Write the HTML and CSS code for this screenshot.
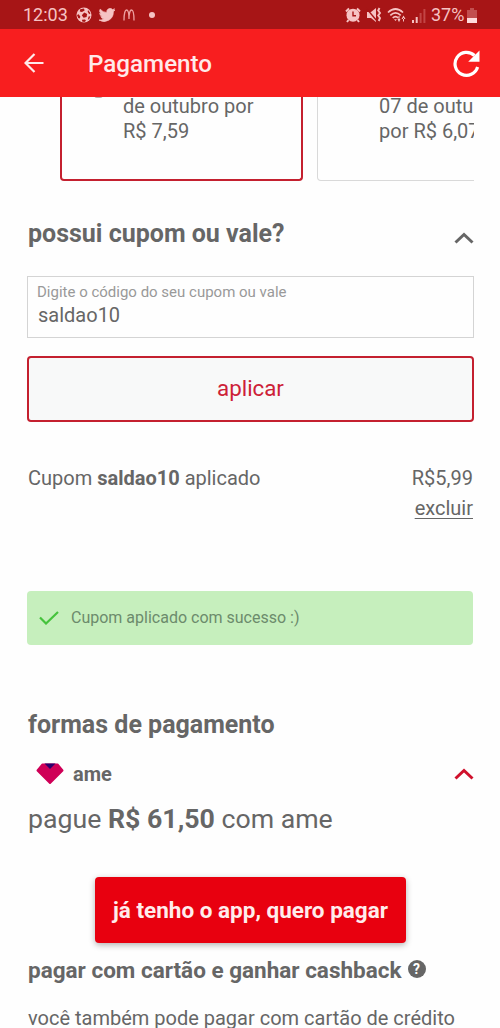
FILE: index.html
```html
<!DOCTYPE html>
<html lang="pt-BR">
<head>
<meta charset="utf-8">
<title>Pagamento</title>
<link rel="stylesheet" href="styles.css">
</head>
<body>
<div class="screen">
  <div class="status">
    <span class="clock">12:03</span>
    <svg class="ic-ball" width="16" height="16" viewBox="0 0 16 16"><circle cx="8" cy="8" r="7.500" fill="#f6c3c3"/><g fill="#a71516"><path d="M8.300 5.600l2.800 1.500-.5 3-3 .6-1.800-2.500z"/><path d="M4.200 2.200L8 1.400l.6 2-2.600 1.700-2.200-.6zM12 3l2.500 3.200-1.300 1-1.500-2.400zM1 8l1.700-.8 1.700 2.600-.8 1.800-1.400-.6zM6 12.800l3-.4 1 1.400-1.600 1.300-2.200-.5zM12.600 9.600l1.800-.4-1.200 3-1.400.2z"/></g></svg>
    <svg class="ic-bird" width="16" height="14" viewBox="0 0 24 20"><path fill="#f6c3c3" stroke="#f6c3c3" d="M24 2.600a10 10 0 0 1-2.800.8A5 5 0 0 0 23.300.6a10 10 0 0 1-3.100 1.200A4.900 4.900 0 0 0 11.800 6.300 14 14 0 0 1 1.700 1.200a4.900 4.900 0 0 0 1.500 6.600 4.900 4.900 0 0 1-2.200-.6 4.900 4.900 0 0 0 3.900 4.900 5 5 0 0 1-2.200.1 4.900 4.900 0 0 0 4.600 3.400A9.900 9.900 0 0 1 0 17.600a14 14 0 0 0 21.500-12.500A10 10 0 0 0 24 2.600z"/></svg>
    <svg class="ic-arch" width="12" height="12" viewBox="0 0 12 12"><path d="M1 11.500C1 5 2 1 3.500 1S6 5 6 10C6 5 7 1 8.500 1S11 5 11 11.500" fill="none" stroke="#eda0a0" stroke-width="1.300"/></svg>
    <span class="dot"></span>
    <span class="grow"></span>
    <svg class="ic-alarm" width="16" height="16" viewBox="0 0 16 16"><circle cx="8" cy="8.200" r="6.500" fill="#f6c3c3"/><path d="M1 4.500L4 1.500M15 4.500L12 1.500M3.500 13L2 15M12.500 13L14 15" stroke="#f6c3c3" stroke-width="2"/><path d="M8 4.500V8.700h3" fill="none" stroke="#a71516" stroke-width="1.400"/></svg>
    <svg class="ic-mute" width="16" height="16" viewBox="0 0 16 16"><path d="M1 5h4l5-4v14l-5-4H1z" fill="#f6c3c3"/><path d="M0 1l11 13" stroke="#a71516" stroke-width="1.400"/><path d="M13.500 1l-1.300 2.500 1.800 2.500-1.800 2.500 1.800 2.500-1.300 3" fill="none" stroke="#f6c3c3" stroke-width="1.900"/></svg>
    <svg class="ic-wifi" width="20" height="16" viewBox="0 0 20 16"><g fill="none" stroke="#f6c3c3" stroke-width="1.700"><path d="M1 5.500Q8.500-1.500 16 5.500M3.300 8.300Q8.500 3.500 13.700 8.300M5.700 10.800Q8.500 8.300 11.300 10.800"/></g><path d="M7 12.300h3L8.500 14zM10.500 12h3L12 15.300zM14.500 12h4L16.500 8.500zM11.500 9h1v4h-1zM16 11h1v3.500h-1z" fill="#f6c3c3"/></svg>
    <svg class="ic-signal" width="14" height="14" viewBox="0 0 14 14"><path d="M0 11h2v3H0zM3.700 8h2v6h-2z" fill="#f6c3c3"/><path d="M7.600 4h2v10h-2zM11.400 0h2v14h-2z" fill="#c24545"/></svg>
    <span class="pct">37%</span>
    <svg class="ic-batt" width="10" height="15" viewBox="0 0 10 15"><path d="M3 0h4v2h3v8H0V2h3z" fill="#c24f4f"/><path d="M0 10h10v5H0z" fill="#ffdcdc"/></svg>
  </div>
  <div class="appbar">
    <svg width="20" height="20" viewBox="0 0 20 20"><path d="M19.500 10H2M10.500 1L1.500 10l9 9" fill="none" stroke="#ffe9e9" stroke-width="2.200"/></svg>
    <h1 class="title">Pagamento</h1>
    <svg width="27" height="27" viewBox="0 0 27 27"><path d="M24.600 17A11.500 11.500 0 1 1 21.500 5.500" fill="none" stroke="#fff" stroke-width="3.200"/><path d="M26.500.5v11.300H15.200z" fill="#fff"/></svg>
  </div>

  <div class="content">
    <div class="offers">
      <div class="offer offer-on"><span class="radio"></span><div class="when">de outubro por<br>R$ 7,59</div></div>
      <div class="offer"><div class="when">07 de outu<br>por R$ 6,07</div></div>
    </div>

    <div class="coupon-head">
      <h2 class="heading">possui cupom ou vale?</h2>
      <svg class="chev" width="20" height="12" viewBox="0 0 20 12"><path d="M1.500 10.500L10 2.500l8.500 8" fill="none" stroke="#666" stroke-width="3"/></svg>
    </div>
    <div class="field">
      <div class="label">Digite o código do seu cupom ou vale</div>
      <div class="value">saldao10</div>
    </div>
    <div class="apply">aplicar</div>
    <div class="applied">
      <div>Cupom <b>saldao10</b> aplicado</div>
      <div class="amount">R$5,99<br><span class="remove">excluir</span></div>
    </div>
    <div class="success">
      <svg width="20" height="14" viewBox="0 0 20 14"><path d="M1 6.500l6 6L19 1" fill="none" stroke="#45c33c" stroke-width="2.200"/></svg>
      <span>Cupom aplicado com sucesso :)</span>
    </div>

    <h2 class="heading methods">formas de pagamento</h2>
    <div class="ame">
      <svg width="28" height="22" viewBox="0 0 28 22"><path d="M6.500 1.500h15l5 6L14 20 1.500 7.500z" fill="#cf0057" stroke="#cf0057" stroke-width="2" stroke-linejoin="round"/><path d="M8.500.5h11L14 6z" fill="#2c006b"/></svg>
      <span class="ame-name">ame</span>
      <svg class="chev" width="20" height="12" viewBox="0 0 20 12"><path d="M1.500 10.500L10 2.500l8.500 8" fill="none" stroke="#d0102c" stroke-width="3"/></svg>
    </div>
    <div class="total">pague <b>R$ 61,50</b> com ame</div>
    <div class="pay">já tenho o app, quero pagar</div>
    <div class="cashback"><span>pagar com cartão e ganhar cashback</span><span class="help">?</span></div>
    <div class="note">você também pode pagar com cartão de crédito</div>
  </div>
</div>
</body>
</html>
```

FILE: styles.css
```css
* { box-sizing: border-box; }
body { margin: 0; background: #fefefe; font-family: Roboto, sans-serif; color: #666; }
svg { display: block; flex: none; }
b { font-weight: 700; }
.screen { width: 500px; height: 1028px; overflow: hidden; display: flex; flex-direction: column; }

.status { flex: none; height: 29px; background: #a71516; color: #f6c3c3; display: flex; align-items: center; padding: 1px 23px 0 23px; white-space: nowrap; }
.clock { width: 46px; font-size: 18px; line-height: 28px; margin-right: 7px; }
.ic-bird { margin-left: 7px; }
.ic-arch { margin-left: 8px; }
.dot { width: 6px; height: 6px; border-radius: 50%; background: #f6c3c3; margin-left: 14px; }
.grow { flex: 1; }
.ic-mute { margin-left: 5px; }
.ic-wifi { margin-left: 5px; }
.ic-signal { margin-left: 5px; margin-top: 2px; }
.pct { width: 35px; font-size: 18px; line-height: 28px; margin-left: 5px; }
.ic-batt { margin-left: 1px; }

.appbar { flex: none; height: 68px; background: #f81e1f; display: flex; align-items: center; padding: 0 20px 0 24px; }
.title { margin: 0 0 0 43px; flex: 1; color: #ffe9e9; font-size: 24.2px; line-height: 68px; font-weight: 500; padding: 1px 0 0 1px; }

.content { flex: 1; padding: 0 26px 0 27px; overflow: hidden; white-space: nowrap; }
.offers { display: flex; gap: 15px; height: 84px; margin-left: 33px; overflow: hidden; font-size: 20px; line-height: 25px; }
.offer { flex: none; width: 242px; height: 84px; border: 1px solid #d9d9d9; border-top: 0; border-radius: 0 0 4px 4px; padding-left: 61px; }
.offer-on { position: relative; width: 243px; border: 2px solid #c4202f; border-top: 0; }
.offer:not(.offer-on) { margin-left: -1px; }
.when { margin-top: -3px; }
.radio { position: absolute; left: 32px; top: -2px; width: 9px; height: 3px; border-radius: 0 0 5px 5px; background: #b9a9a9; }

.coupon-head { display: flex; justify-content: space-between; margin-top: 37px; height: 58px; }
.heading { margin: 0; padding: 1px 0 0 1px; font-size: 25px; line-height: 30px; font-weight: 700; }
.coupon-head .chev { margin-top: 14px; }
.field { height: 62px; border: 1px solid #d4d4d4; padding: 6px 0 0 9px; }
.label { font-size: 15px; line-height: 18px; color: #999; }
.value { font-size: 20px; line-height: 26px; padding: 1px 0 0 1px; }
.apply { height: 66px; margin-top: 18px; border: 2px solid #c4202f; border-radius: 4px; background: #f8f9f9; color: #cd2138; font-size: 22.3px; line-height: 60px; text-align: center; }
.applied { display: flex; justify-content: space-between; margin-top: 41px; height: 128px; font-size: 20px; line-height: 30px; padding: 0 1px; }
.amount { text-align: right; }
.remove { text-decoration: underline; text-decoration-thickness: 1px; text-underline-offset: 3px; }
.success { width: 446px; height: 54px; border-radius: 4px; background: #c6efbd; display: flex; align-items: center; gap: 12px; padding-left: 12px; padding-bottom: 1px; font-size: 16px; color: #6c8b6c; }
.methods { margin-top: 64px; }
.ame { display: flex; align-items: center; height: 32px; margin-top: 18px; padding-left: 9px; }
.ame-name { flex: 1; margin-left: 9px; font-size: 20px; font-weight: 700; }
.total { margin-top: 12px; font-size: 26.7px; line-height: 34px; padding-left: 1px; }
.pay { width: 311px; height: 66px; margin: 41px 0 0 68px; border-radius: 4px; background: #e8000f; color: #ffecec; box-shadow: 0 2px 6px rgba(0,0,0,.3); font-size: 22.5px; font-weight: 700; line-height: 66px; text-align: center; }
.cashback { display: flex; align-items: center; margin-top: 12px; height: 30px; font-size: 22.5px; font-weight: 700; padding-left: 1px; }
.help { width: 18px; height: 18px; margin-left: 6px; margin-top: -2px; border-radius: 50%; background: #666; color: #fff; font-size: 14px; line-height: 18px; text-align: center; }
.note { margin-top: 18px; font-size: 20px; line-height: 30px; padding-left: 1px; }
```
